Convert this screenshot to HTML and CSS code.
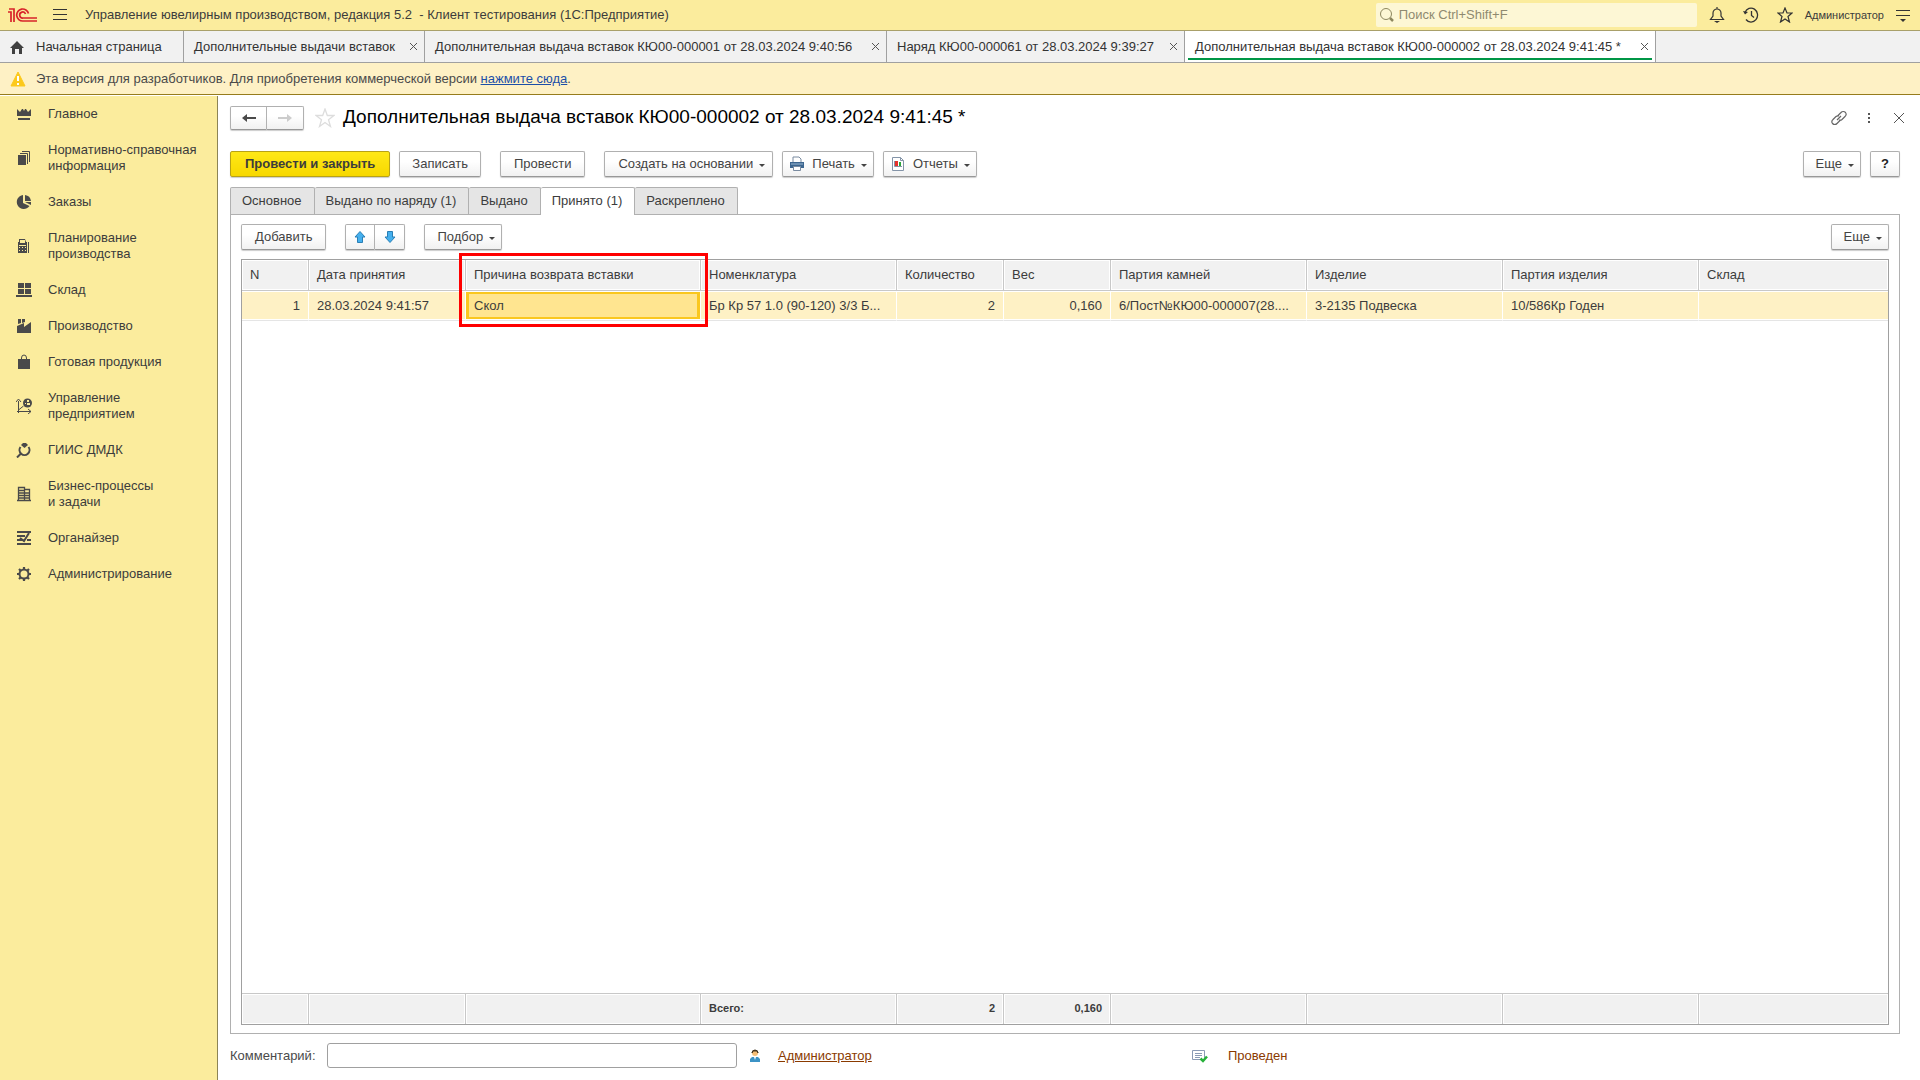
FILE: index.html
```html
<!DOCTYPE html>
<html lang="ru">
<head>
<meta charset="utf-8">
<title>Дополнительная выдача вставок КЮ00-000002 от 28.03.2024 9:41:45 *</title>
<link rel="stylesheet" href="styles.css">
</head>
<body>
<header class="topbar">
  <svg class="logo" width="30" height="14" viewBox="0 0 30 14" fill="none" stroke="#d8232a" stroke-width="1.700"><path d="M0 4h3v10M1 1h5v13"/><path d="M20.500 5.500A6 6 0 1 0 15 13H29"/><path d="M17.500 6A3 3 0 1 0 15 10H29"/></svg>
  <button class="icon-btn menu-btn" aria-label="Главное меню"><svg width="14" height="14" viewBox="0 0 14 14" stroke="#333" fill="none"><path d="M0 1.500h14M0 6.500h14M0 11.500h14"/></svg></button>
  <h1 class="app-title">Управление ювелирным производством, редакция 5.2 &nbsp;- Клиент тестирования (1С:Предприятие)</h1>
  <label class="search">
    <svg width="16" height="16" viewBox="0 0 16 16" fill="none" stroke="#8d875f"><circle cx="7" cy="7" r="5.500"/><path d="M11 11l3 3" stroke-width="2.500"/></svg>
    <input type="search" placeholder="Поиск Ctrl+Shift+F" aria-label="Поиск">
  </label>
  <div class="top-tools">
    <button class="icon-btn" aria-label="Уведомления"><svg width="16" height="16" viewBox="0 0 16 16" fill="none" stroke="#333" stroke-width="1.200"><path d="M1.500 12.500h13L12 9V6a4 4 0 0 0-8 0v3zM8 2V0"/><path d="M5 14h6l-3 2z" fill="#333" stroke="none"/></svg></button>
    <button class="icon-btn" aria-label="История"><svg width="16" height="16" viewBox="0 0 16 16" fill="none" stroke="#333" stroke-width="1.300"><path d="M2 5.500A6.500 7 0 1 1 3 12.500"/><path d="M8.500 4v4.500l2.500 2"/><path d="M0 4l2 3.500L5 5z" fill="#333" stroke="none"/></svg></button>
    <button class="icon-btn" aria-label="Избранное"><svg width="16" height="16" viewBox="0 0 16 16" fill="none" stroke="#333" stroke-width="1.200"><path d="M8 1l2 5h5l-4 3.500 1.500 5.500L8 12l-4.500 3L5 9.500 1 6h5z"/></svg></button>
  </div>
  <a class="user" href="#">Администратор</a>
  <button class="icon-btn settings" aria-label="Настройка"><svg width="14" height="14" viewBox="0 0 14 14" stroke="#333" fill="none"><path d="M0 1.500h14M0 6.500h14"/><path d="M4 10h6l-3 3z" fill="#333" stroke="none"/></svg></button>
</header>
<nav class="windows" aria-label="Открытые окна">
  <a class="win home" href="#"><svg width="14" height="14" viewBox="0 0 14 14" fill="#404040"><path d="M7 1l7 7h-2v6H9V9H5v5H2V8H0z"/></svg>Начальная страница</a>
  <div class="win list"><a href="#">Дополнительные выдачи вставок</a><button class="x" aria-label="Закрыть"></button></div>
  <div class="win long"><a href="#">Дополнительная выдача вставок КЮ00-000001 от 28.03.2024 9:40:56</a><button class="x" aria-label="Закрыть"></button></div>
  <div class="win medium"><a href="#">Наряд КЮ00-000061 от 28.03.2024 9:39:27</a><button class="x" aria-label="Закрыть"></button></div>
  <div class="win long active"><a href="#">Дополнительная выдача вставок КЮ00-000002 от 28.03.2024 9:41:45 *</a><button class="x" aria-label="Закрыть"></button></div>
</nav>
<div class="notice">
  <svg width="16" height="16" viewBox="0 0 16 16"><path d="M8 1l7 14H1z" fill="#fcc91c" stroke="#fcc91c" stroke-linejoin="round"/><path d="M7 5h2v5H7zM7 12h2v2H7z" fill="#fff"/></svg>
  <p>Эта версия для разработчиков. Для приобретения коммерческой версии <a href="#">нажмите сюда</a>.</p>
</div>
<div class="body">
  <nav class="sidebar" aria-label="Разделы">
    <a href="#"><svg viewBox="0 0 16 16"><path d="M1 3l3 3 2-3h1l1 2 1-2h1l2 3 3-3v7H1zM2 12h12v2H2z"/></svg><span>Главное</span></a>
    <a href="#"><svg viewBox="0 0 16 16"><path d="M2 5h8v10H2z"/><path d="M4 3.500h7.500V14M6 1.500h7.500V12" fill="none" stroke="#4a4a4a"/></svg><span>Нормативно-справочная<br>информация</span></a>
    <a href="#"><svg viewBox="0 0 16 16"><path d="M7 1v8l6.500 3A7 7 0 1 1 7 1z"/><path d="M9 1a7 7 0 0 1 6 6H9zM9 8h6v3z"/></svg><span>Заказы</span></a>
    <a href="#"><svg viewBox="0 0 16 16"><path fill-rule="evenodd" d="M3 1h6l1 3h1v11H2V4h1zM4 2v3h5V2zM3 7h7v1H3zM3 9h1v1H3zM6 9h1v1H6zM9 9h1v1H9zM3 12h1v1H3zM6 12h1v1H6zM9 12h1v1H9zM12 4h1v11h-1z"/></svg><span>Планирование<br>производства</span></a>
    <a href="#"><svg viewBox="0 0 16 16"><path d="M2 1h6v5H2zM9 1h6v5H9zM2 7h6v5H2zM9 7h6v5H9zM0 13h16v2H0z"/></svg><span>Склад</span></a>
    <a href="#"><svg viewBox="0 0 16 16"><path d="M2 1h3v4L2 6zM6 1h3v3L6 5zM1 8l7-3v4l7-5v11H1z"/></svg><span>Производство</span></a>
    <a href="#"><svg viewBox="0 0 16 16"><path d="M2 5h12v10H2z"/><path d="M5.500 7V4a2.500 3 0 0 1 5 0v3" fill="none" stroke="#4a4a4a"/></svg><span>Готовая продукция</span></a>
    <a href="#"><svg viewBox="0 0 16 16"><path d="M2.500 3v12M1 13.500h14M2.500 12l5-4M0 4l2.500-3L5 4M12 11l3 2.500-3 2.500" fill="none" stroke="#4a4a4a"/><circle cx="11.500" cy="5" r="4.500"/><path d="M11 2h2v2h-2zM11 5h3v2h-3zM9 5h1v1H9z" fill="#fbec9d"/></svg><span>Управление<br>предприятием</span></a>
    <a href="#"><svg viewBox="0 0 16 16"><path d="M5 3l2-2h3l2 2-3.500 3z"/><path d="M4.500 5a5 5 0 1 0 8 0M4.500 12L1 15.500" fill="none" stroke="#4a4a4a" stroke-width="2"/></svg><span>ГИИС ДМДК</span></a>
    <a href="#"><svg viewBox="0 0 16 16"><path d="M2.500 15V1.500h6V15M8.500 3.500h5V15M1 14.500h14M3 4.500h6M3 7h11M3 9.500h11M3 12h11" fill="none" stroke="#4a4a4a" stroke-width="1.300"/></svg><span>Бизнес-процессы<br>и задачи</span></a>
    <a href="#"><svg viewBox="0 0 16 16"><path d="M1 2h14M1 6h8M1 10h5M11 10h4M1 14h14M13 3L8 11 4 8" fill="none" stroke="#4a4a4a" stroke-width="2"/></svg><span>Органайзер</span></a>
    <a href="#"><svg viewBox="0 0 16 16"><circle cx="8" cy="8" r="4.500" fill="none" stroke="#4a4a4a" stroke-width="2"/><path d="M8 1v2M8 13v2M1 8h2M13 8h2M3 3l1.500 1.500M11.500 11.500L13 13M3 13l1.500-1.500M11.500 4.500L13 3" stroke="#4a4a4a" stroke-width="2.200"/></svg><span>Администрирование</span></a>
  </nav>
  <main class="form">
    <div class="form-head">
      <div class="pair nav-pair">
        <button aria-label="Назад"><svg width="14" height="10" viewBox="0 0 14 10"><path d="M0 5l5-4v3h9v2H5v3z" fill="#4a4a4a"/></svg></button>
        <button aria-label="Вперед"><svg width="14" height="10" viewBox="0 0 14 10"><path d="M14 5L9 1v3H0v2h9v3z" fill="#ccc"/></svg></button>
      </div>
      <button class="icon-btn fav" aria-label="В избранное"><svg width="20" height="20" viewBox="0 0 20 20" fill="none" stroke="#ddd" stroke-width="1.300"><path d="M10 1l2.300 6.500H19l-5.500 4.200 2 6.800L10 14.500l-5.500 4 2-6.800L1 7.500h6.700z"/></svg></button>
      <h2 class="form-title">Дополнительная выдача вставок КЮ00-000002 от 28.03.2024 9:41:45 *</h2>
      <div class="head-tools">
        <button class="icon-btn" aria-label="Получить ссылку"><svg width="16" height="16" viewBox="0 0 16 16" fill="none" stroke="#666" stroke-width="1.200"><path d="M6.500 6L10 2.500a3 3 0 0 1 4.500 0 3 3 0 0 1-.5 4L11 9.500a3 3 0 0 1-3 .5M9.500 10L6 13.500a3 3 0 0 1-4.500 0 3 3 0 0 1 .5-4l3-3a3 3 0 0 1 3-.5M6 10l4-4"/></svg></button>
        <button class="icon-btn" aria-label="Дополнительно"><svg width="16" height="16" viewBox="0 0 16 16" fill="#555"><path d="M7 3h2v2H7zM7 7h2v2H7zM7 11h2v2H7z"/></svg></button>
        <button class="icon-btn" aria-label="Закрыть"><svg width="16" height="16" viewBox="0 0 16 16" stroke="#555"><path d="M3 3l10 10M13 3L3 13"/></svg></button>
      </div>
    </div>
    <div class="commands">
      <button class="btn primary">Провести и закрыть</button>
      <button class="btn">Записать</button>
      <button class="btn spaced">Провести</button>
      <button class="btn drop spaced">Создать на основании</button>
      <button class="btn drop with-icon"><svg width="16" height="16" viewBox="0 0 16 16"><path d="M4 6V1h6l2 2v3" fill="#fff" stroke="#7a8ba0"/><path d="M1 6h14v6H1z" fill="#3d668f"/><path d="M2 8h12" stroke="#9db9d4"/><path d="M4.500 10.500h7v4h-7z" fill="#fff" stroke="#7a8ba0"/></svg>Печать</button>
      <button class="btn drop with-icon"><svg width="16" height="16" viewBox="0 0 16 16"><path d="M2.500 1.500h8l3 3v10h-11z" fill="#fff" stroke="#8494a8"/><path d="M10.500 1.500v3h3" fill="none" stroke="#8494a8"/><path d="M4.500 5v5.500H12" fill="none" stroke="#8494a8"/><path d="M5 5h3v5H5z" fill="#e5312b"/><path d="M9 6h2v4H9z" fill="#2aa43a"/></svg>Отчеты</button>
      <button class="btn drop push">Еще</button>
      <button class="btn help">?</button>
    </div>
    <div class="tabs" role="tablist">
      <button role="tab">Основное</button><button role="tab">Выдано по наряду (1)</button><button role="tab">Выдано</button><button role="tab" class="current" aria-selected="true">Принято (1)</button><button role="tab">Раскреплено</button>
    </div>
    <section class="panel">
      <div class="toolbar">
        <button class="btn">Добавить</button>
        <div class="pair">
          <button aria-label="Вверх"><svg width="12" height="12" viewBox="0 0 12 12"><path d="M6 0.500l5 5.500H8.500v5.500h-5V6H1z" fill="#45b0ee" stroke="#2a7fb5"/></svg></button>
          <button aria-label="Вниз"><svg width="12" height="12" viewBox="0 0 12 12"><path d="M6 11.500L1 6h2.500V.5h5V6H11z" fill="#45b0ee" stroke="#2a7fb5"/></svg></button>
        </div>
        <button class="btn drop">Подбор</button>
        <button class="btn drop push">Еще</button>
      </div>
      <div class="grid">
        <table>
          <colgroup><col class="c-n"><col class="c-date"><col class="c-reason"><col class="c-item"><col class="c-qty"><col class="c-qty"><col class="c-item"><col class="c-item"><col class="c-item"><col></colgroup>
          <thead><tr><th>N</th><th>Дата принятия</th><th class="marked">Причина возврата вставки</th><th>Номенклатура</th><th>Количество</th><th>Вес</th><th>Партия камней</th><th>Изделие</th><th>Партия изделия</th><th>Склад</th></tr></thead>
          <tbody>
            <tr class="row"><td class="num">1</td><td>28.03.2024 9:41:57</td><td class="selected">Скол</td><td>Бр Кр 57 1.0 (90-120) 3/3 Б...</td><td class="num">2</td><td class="num">0,160</td><td>6/Пост№КЮ00-000007(28....</td><td>3-2135 Подвеска</td><td>10/586Кр Годен</td><td></td></tr>
            <tr class="filler"><td colspan="10"></td></tr>
          </tbody>
          <tfoot><tr><td></td><td></td><td></td><td>Всего:</td><td class="num">2</td><td class="num">0,160</td><td></td><td></td><td></td><td></td></tr></tfoot>
        </table>
      </div>
    </section>
    <footer class="status">
      <div class="status-left">
        <label for="comment">Комментарий:</label>
        <input id="comment" type="text">
        <svg width="10" height="14" viewBox="0 0 10 14"><circle cx="5" cy="4" r="3" fill="#f4bd76"/><path d="M2 4a3 3 0 0 1 6 0L7 2H3z" fill="#443420" stroke="#443420"/><path d="M0 13V10l2-2h6l2 2v3z" fill="#3c93c6"/><path d="M4 8h2l-1 3z" fill="#fff"/></svg>
        <a href="#">Администратор</a>
      </div>
      <div class="status-right">
        <svg width="16" height="14" viewBox="0 0 16 14"><path d="M.5 1.500h12v9H.5z" fill="#fff" stroke="#8a9ab5"/><path d="M3 4.500h7M3 6.500h7M3 8.500h5" stroke="#8a9ab5"/><path d="M8.500 9.500l2.500 2.500L15 7.500" fill="none" stroke="#27b13a" stroke-width="2.500"/></svg>
        <span>Проведен</span>
      </div>
    </footer>
  </main>
</div>
</body>
</html>
```
FILE: styles.css
```css
* { box-sizing: border-box; }
body {
  margin: 0;
  min-height: 100vh;
  display: flex;
  flex-direction: column;
  background: #fff;
  color: #3c3c3c;
  font: 13px/16px "Liberation Sans", Arial, sans-serif;
}
button, input { font: inherit; color: inherit; }
h1, h2, p { margin: 0; font: inherit; }
svg { flex: none; display: block; }
.icon-btn { border: 0; padding: 0; background: none; display: flex; }

.topbar {
  display: flex;
  align-items: center;
  gap: 12px;
  height: 31px;
  padding: 0 10px 0 8px;
  background: #fbec9d;
  border-bottom: 1px solid #a9a06a;
}
.menu-btn { margin-left: 3px; }
.app-title { margin: 0 auto 0 6px; }
.search {
  display: flex;
  align-items: center;
  gap: 4px;
  width: 321px;
  height: 24px;
  padding-left: 3px;
  background: #fdf7d5;
  border-radius: 2px;
}
.search input { flex: 1; min-width: 0; border: 0; padding: 0; outline: 0; background: none; }
.search input::placeholder { color: #8f8a70; opacity: 1; }
.top-tools { display: flex; gap: 18px; }
.user { font-size: 11px; color: inherit; text-decoration: none; }
.settings { margin-top: 2px; }

.windows { display: flex; height: 32px; background: #f1f1f1; border-bottom: 1px solid #a0a0a0; }
.win {
  position: relative;
  display: flex;
  align-items: center;
  justify-content: space-between;
  gap: 5px;
  padding: 0 4px 0 10px;
  border-right: 1px solid #a0a0a0;
}
.win, .win a { color: #333; text-decoration: none; white-space: nowrap; }
.home { min-width: 184px; padding-right: 19px; gap: 12px; justify-content: flex-start; }
.list { min-width: 241px; }
.medium { min-width: 298px; }
.long { min-width: 462px; }
.win.active { min-width: 471px; background: #fff; }
.win.active::after { content: ""; position: absolute; left: 3px; right: 3px; bottom: 2px; height: 2px; background: #009646; }
.x {
  width: 14px;
  height: 14px;
  border: 0;
  padding: 0;
  background:
    linear-gradient(45deg, transparent 46%, #555 46% 54%, transparent 54%) center / 7px 7px no-repeat,
    linear-gradient(-45deg, transparent 46%, #555 46% 54%, transparent 54%) center / 7px 7px no-repeat;
}

.notice { display: flex; align-items: center; gap: 10px; height: 32px; padding: 0 10px; background: #fef1c5; border-bottom: 1px solid #967c1c; color: #4a4a4a; }
.notice a { color: #1c4fa8; }

.body { flex: 1; display: flex; }
.sidebar { width: 218px; flex: none; margin-top: 1px; background: #fbec9d; border-right: 1px solid #8c8455; }
.sidebar a { display: flex; align-items: center; gap: 16px; padding: 10px 0 10px 16px; color: #3c3c3c; text-decoration: none; }
.sidebar svg { width: 16px; height: 16px; fill: #4a4a4a; }

.form { flex: 1; min-width: 0; display: flex; flex-direction: column; padding: 10px 20px 12px 12px; }
.form-head { display: flex; align-items: center; height: 25px; }
.pair { display: flex; }
.pair button, .btn {
  border: 1px solid #b0b0b0;
  border-bottom-color: #989898;
  background: linear-gradient(#fff 40%, #f1f1f1);
  box-shadow: 0 1px 1px #ccc;
  color: #444;
}
.pair button { width: 30px; height: 26px; padding: 0; display: flex; align-items: center; justify-content: center; }
.pair button:first-child { border-radius: 2px 0 0 2px; }
.pair button:last-child { border-left: 0; border-radius: 0 2px 2px 0; }
.nav-pair button { width: 37px; height: 24px; }
.fav { margin: 0 8px 0 11px; }
.form-title { padding-bottom: 2px; font-size: 19px; line-height: 22px; color: #000; }
.head-tools { display: flex; gap: 14px; margin: 0 -7px 0 auto; }

.btn { height: 26px; padding: 0 12px; border-radius: 2px; white-space: nowrap; }
.commands { display: flex; gap: 9px; margin-top: 21px; }
.primary { padding: 0 14px; background: linear-gradient(#ffe817, #f7d800); border-color: #b8a216; font-weight: bold; color: #3c3c3c; }
.spaced { margin-left: 10px; padding: 0 13px; }
.drop { display: flex; align-items: center; padding-right: 6px; }
.drop::after { content: ""; margin: 3px 0 0 6px; border: 3px solid transparent; border-top-color: #444; border-bottom: 0; }
.drop.spaced { padding-right: 7px; }
.with-icon { padding-left: 6px; }
.with-icon svg { margin-right: 7px; }
.push { margin-left: auto; }
.help { width: 30px; padding: 0; font-weight: bold; color: #222; }

.tabs { display: flex; margin-top: 10px; height: 27px; }
.tabs button { border: 1px solid #b0b0b0; border-left-width: 0; border-bottom: 0; border-radius: 2px 2px 0 0; padding: 0 12px 0 11px; background: #e5e5e5; color: #3c3c3c; }
.tabs button:first-child { border-left-width: 1px; }
.tabs .current { position: relative; height: 28px; padding-bottom: 2px; background: #fff; }

.panel { flex: 1; display: flex; flex-direction: column; padding: 9px 10px 8px; border: 1px solid #b0b0b0; }
.toolbar { display: flex; gap: 19px; }
.toolbar .btn:first-child { padding: 0 13px; }
.grid { flex: 1; display: flex; margin-top: 9px; border: 1px solid #a0a0a0; }
table { width: 100%; height: 100%; table-layout: fixed; border-collapse: separate; border-spacing: 0; }
.c-n { width: 67px; }
.c-date { width: 157px; }
.c-reason { width: 235px; }
.c-item { width: 196px; }
.c-qty { width: 107px; }
th, td { padding: 0 8px; text-align: left; font-weight: normal; white-space: nowrap; overflow: hidden; text-overflow: ellipsis; border-right: 1px solid #c8c8c8; }
th:last-child, td:last-child { border-right: 0; }
th, tfoot td { height: 31px; background: #f1f1f1; box-shadow: inset 0 0 0 1px #fff; }
th { border-bottom: 1px solid #c8c8c8; }
.row td { height: 30px; background: #fef1c5; border-right-color: #fff; border-bottom: 1px solid #e5e5e5; box-shadow: inset 0 1px #fff, inset 0 -1px #fff; }
.row .selected { background: #ffe590; box-shadow: inset 0 1px #fff, inset 0 -1px #fff, inset 0 0 0 3px #fac71f; }
.num { text-align: right; }
.filler td { border: 0; }
tfoot td { height: 31px; border-top: 1px solid #c8c8c8; font-size: 11px; font-weight: bold; padding-bottom: 2px; }
th.marked { position: relative; overflow: visible; }
.marked::after { content: ""; position: absolute; z-index: 1; left: -7px; right: -8px; top: -7px; height: 68px; border: 3px solid #f00; }

.status { display: grid; grid-template-columns: 962px 1fr; align-items: center; margin-top: 9px; color: #4a4a4a; }
.status-left, .status-right { display: flex; align-items: center; }
.status label { width: 97px; }
.status input { width: 410px; height: 25px; border: 1px solid #a0a0a0; border-radius: 3px; padding: 0 6px; margin-right: 13px; }
.status a { margin-left: 18px; color: #8a3a00; }
.status-right { gap: 20px; color: #8a3a00; }
```
